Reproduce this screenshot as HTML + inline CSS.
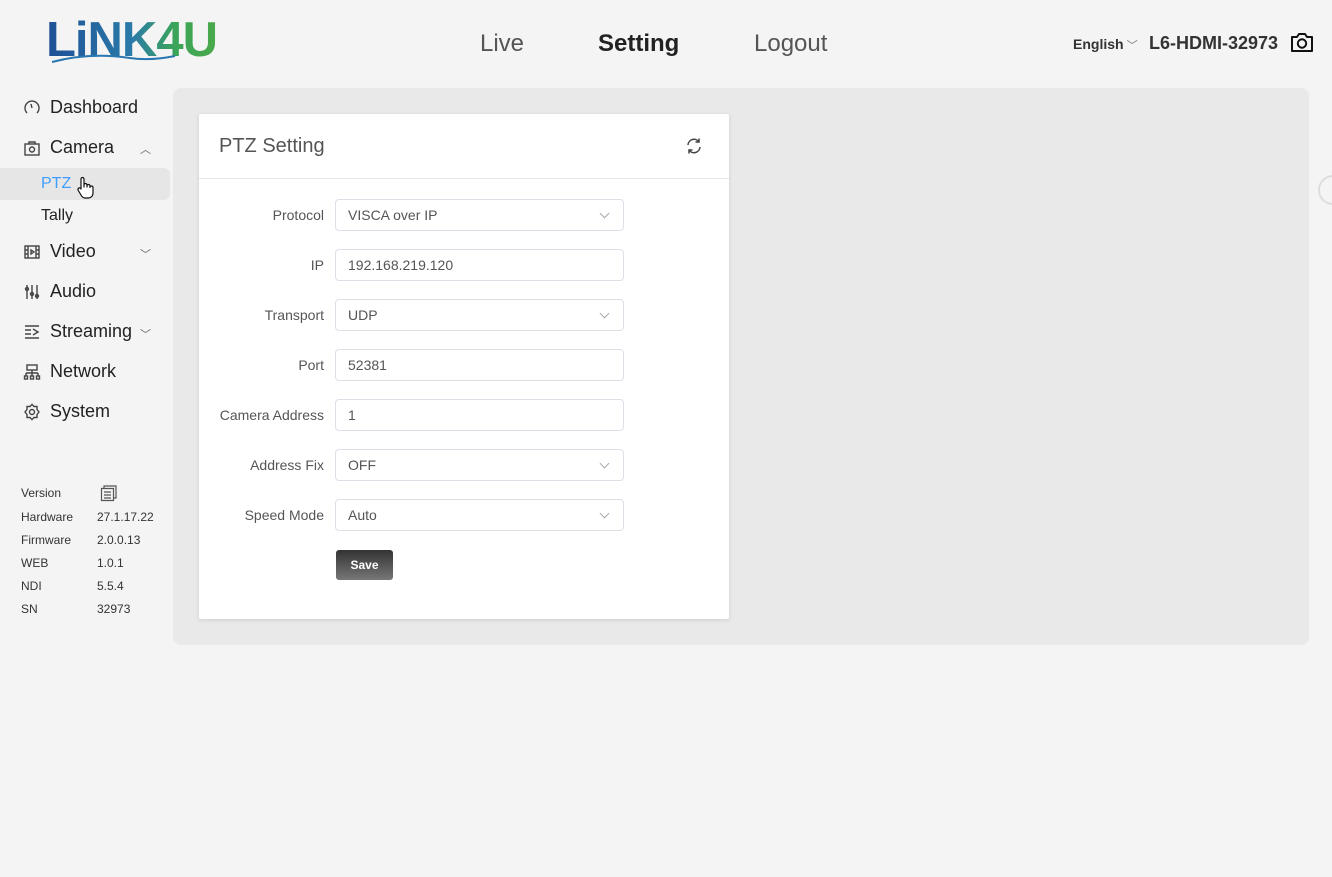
<!DOCTYPE html>
<html><head><meta charset="utf-8"><style>
*{box-sizing:border-box;margin:0;padding:0}
body{width:1332px;height:877px;background:#f4f4f4;font-family:"Liberation Sans",Arial,sans-serif;position:relative;overflow:hidden;color:#303133}
.abs{position:absolute}
.nav{font-size:24px;color:#555;top:30px}
.side{left:23px;font-size:18px;color:#222;display:flex;align-items:center}
.side svg{width:18px;height:18px;margin-right:9px;fill:none;stroke:#444;stroke-width:1.4}
.chev{position:absolute;left:140px;font-size:11px;color:#666}
.ver{font-size:12px;color:#333;left:21px}
.ver2{font-size:12px;color:#333;left:97px}
.lbl{font-size:14px;color:#555;right:1008px;text-align:right}
.inp{left:335px;width:289px;height:32px;border:1px solid #dcdfe6;border-radius:4px;background:#fff;font-size:14px;color:#555;padding:0 12px;line-height:30px}
.dd:after{content:"";position:absolute;right:15px;top:10px;width:6px;height:6px;border-right:1px solid #aaa;border-bottom:1px solid #aaa;transform:rotate(45deg)}
.logo{background:linear-gradient(90deg,#1f4f96 0%,#2a7aa8 50%,#3aa45a 75%,#4aaa4a 100%);-webkit-background-clip:text;background-clip:text;color:transparent}
</style></head><body>
<div class="abs logo" style="left:46px;top:12px;font-size:49px;font-weight:bold;letter-spacing:-1px;line-height:56px">LiNK4U</div>
<svg class="abs" style="left:50px;top:52px" width="130" height="14"><path d="M2 10 Q40 0 80 6 Q100 9 125 4" stroke="#2a76b0" stroke-width="2" fill="none"/></svg>
<div class="abs nav" style="left:480px">Live</div>
<div class="abs nav" style="left:598px;color:#222;font-weight:bold">Setting</div>
<div class="abs nav" style="left:754px">Logout</div>
<div class="abs" style="left:1073px;top:36px;font-size:14px;font-weight:bold;color:#333">English<span style="font-weight:normal;color:#777;font-size:11px"> ﹀</span></div>
<div class="abs" style="left:1149px;top:33px;font-size:18px;font-weight:bold;color:#333">L6-HDMI-32973</div>
<svg class="abs" style="left:1290px;top:31px" width="24" height="22" viewBox="0 0 24 22"><path d="M2 6h5l2-3h6l2 3h5v14H2z" fill="none" stroke="#111" stroke-width="2" stroke-linejoin="round"/><circle cx="12" cy="12.5" r="4.2" fill="none" stroke="#111" stroke-width="2"/></svg>

<div class="abs side" style="top:97px"><svg viewBox="0 0 18 18"><path d="M4 14A7 7 0 1 1 14 14"/><path d="M9 9l-1-4"/></svg>Dashboard</div>
<div class="abs side" style="top:137px"><svg viewBox="0 0 18 18"><rect x="2" y="5" width="14" height="11"/><path d="M6 5V3h6v2"/><circle cx="9" cy="10.5" r="2.5"/></svg>Camera</div>
<div class="chev" style="top:141px">︿</div>
<div class="abs" style="left:0;top:168px;width:170px;height:32px;background:#e6e6e6;border-radius:0 6px 6px 0"></div>
<div class="abs" style="left:41px;top:175px;font-size:16px;color:#409eff">PTZ</div>
<svg class="abs" style="left:76px;top:176px" width="18" height="24" viewBox="0 0 18 24"><path d="M5 13V3a1.5 1.5 0 0 1 3 0v8V9a1.5 1.5 0 0 1 3 0v2-1a1.5 1.5 0 0 1 3 0v1.5a1.5 1.5 0 0 1 3 0V17c0 3-2 5-5 5H9c-2 0-3-1-4-3L2 14a1.5 1.5 0 0 1 3-1z" fill="#fff" stroke="#111" stroke-width="1.2" stroke-linejoin="round"/></svg>
<div class="abs" style="left:41px;top:207px;font-size:16px;color:#222">Tally</div>
<div class="abs side" style="top:241px"><svg viewBox="0 0 18 18"><rect x="2" y="3" width="14" height="12"/><path d="M5 3v12M13 3v12M2 7h3M2 11h3M13 7h3M13 11h3M8 7l3 2-3 2z"/></svg>Video</div>
<div class="chev" style="top:246px">﹀</div>
<div class="abs side" style="top:281px"><svg viewBox="0 0 18 18"><path d="M4 2v14M9 2v14M14 2v14"/><circle cx="4" cy="6" r="1.5"/><circle cx="9" cy="11" r="1.5"/><circle cx="14" cy="13" r="1.5"/></svg>Audio</div>
<div class="abs side" style="top:321px"><svg viewBox="0 0 18 18"><path d="M2 3h14M2 7h6M2 11h6M2 15h14M10 6l5 3-5 3"/></svg>Streaming</div>
<div class="chev" style="top:326px">﹀</div>
<div class="abs side" style="top:361px"><svg viewBox="0 0 18 18"><rect x="4" y="2" width="10" height="5"/><path d="M9 7v3M3 10h12M3 10v3M9 10v3M15 10v3"/><rect x="1.5" y="13" width="3" height="3"/><rect x="7.5" y="13" width="3" height="3"/><rect x="13.5" y="13" width="3" height="3"/></svg>Network</div>
<div class="abs side" style="top:401px"><svg viewBox="0 0 18 18"><path d="M9 1.5l2 2h3v3l2 2.5-2 2.5v3h-3l-2 2-2-2H4v-3L2 9l2-2.5v-3h3z"/><circle cx="9" cy="9" r="2.5"/></svg>System</div>

<div class="abs ver" style="top:486px">Version</div>
<svg class="abs" style="left:100px;top:485px" width="18" height="17" viewBox="0 0 18 17"><path d="M4 3V1h12v12h-2M1.5 3.5h12v12h-12zM4 7h7M4 10h7M4 13h7" fill="none" stroke="#555" stroke-width="1.2"/></svg>
<div class="abs ver" style="top:510px">Hardware</div><div class="abs ver2" style="top:510px">27.1.17.22</div>
<div class="abs ver" style="top:533px">Firmware</div><div class="abs ver2" style="top:533px">2.0.0.13</div>
<div class="abs ver" style="top:556px">WEB</div><div class="abs ver2" style="top:556px">1.0.1</div>
<div class="abs ver" style="top:579px">NDI</div><div class="abs ver2" style="top:579px">5.5.4</div>
<div class="abs ver" style="top:602px">SN</div><div class="abs ver2" style="top:602px">32973</div>

<div class="abs" style="left:173px;top:88px;width:1136px;height:557px;background:#e9e9e9;border-radius:8px"></div>
<div class="abs" style="left:1318px;top:175px;width:30px;height:30px;border:2px solid #ddd;border-radius:50%"></div>
<div class="abs" style="left:199px;top:114px;width:530px;height:505px;background:#fff;border-radius:2px;box-shadow:0 1px 4px rgba(0,0,0,.12)">
<div class="abs" style="left:20px;top:21px;font-size:20px;color:#555">PTZ Setting</div>
<svg class="abs" style="left:486px;top:23px" width="18" height="18" viewBox="0 0 18 18"><path d="M3 8a6 6 0 0 1 11-3M15 10a6 6 0 0 1-11 3M14 1.5V5h-3.5M4 16.5V13h3.5" fill="none" stroke="#444" stroke-width="1.5"/></svg>
<div class="abs" style="left:0;top:64px;width:530px;height:1px;background:#e4e7ed"></div>
</div>

<div class="abs lbl" style="top:207px">Protocol</div><div class="abs inp dd" style="top:199px">VISCA over IP</div>
<div class="abs lbl" style="top:257px">IP</div><div class="abs inp" style="top:249px">192.168.219.120</div>
<div class="abs lbl" style="top:307px">Transport</div><div class="abs inp dd" style="top:299px">UDP</div>
<div class="abs lbl" style="top:357px">Port</div><div class="abs inp" style="top:349px">52381</div>
<div class="abs lbl" style="top:407px">Camera Address</div><div class="abs inp" style="top:399px">1</div>
<div class="abs lbl" style="top:457px">Address Fix</div><div class="abs inp dd" style="top:449px">OFF</div>
<div class="abs lbl" style="top:507px">Speed Mode</div><div class="abs inp dd" style="top:499px">Auto</div>
<div class="abs" style="left:336px;top:550px;width:57px;height:30px;border-radius:3px;background:linear-gradient(#333,#777);color:#fff;font-size:12px;font-weight:bold;text-align:center;line-height:30px">Save</div>
</body></html>
